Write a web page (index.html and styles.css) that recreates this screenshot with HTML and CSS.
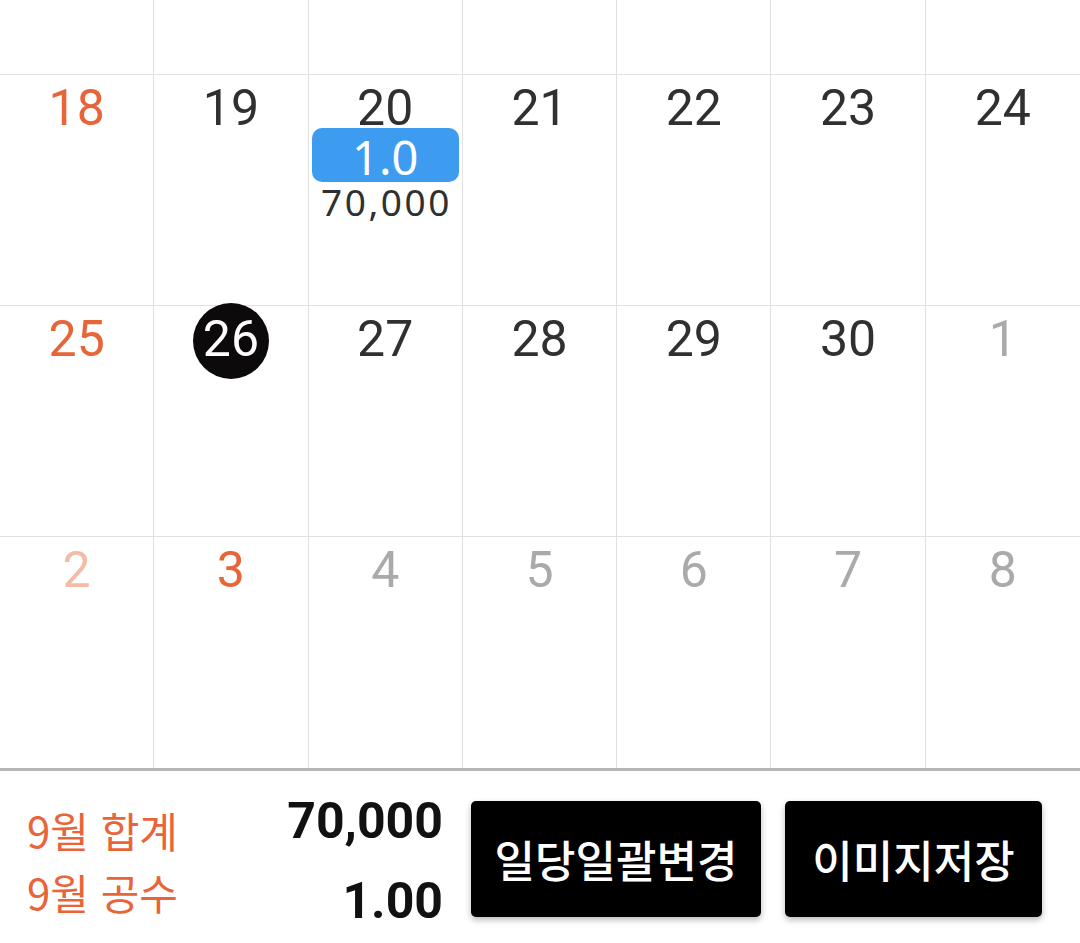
FILE: index.html
```html
<!DOCTYPE html>
<html lang="ko">
<head>
<meta charset="utf-8">
<title>달력</title>
<link rel="stylesheet" href="styles.css">
</head>
<body>
<div class="cal">
  <div class="row top">
    <div class="cell"></div><div class="cell"></div><div class="cell"></div><div class="cell"></div><div class="cell"></div><div class="cell"></div><div class="cell"></div>
  </div>
  <div class="row week">
    <div class="cell"><span class="num sun">18</span></div>
    <div class="cell"><span class="num">19</span></div>
    <div class="cell"><span class="num">20</span><div class="badge">1.0</div><div class="amount">70,000</div></div>
    <div class="cell"><span class="num">21</span></div>
    <div class="cell"><span class="num">22</span></div>
    <div class="cell"><span class="num">23</span></div>
    <div class="cell"><span class="num">24</span></div>
  </div>
  <div class="row week">
    <div class="cell"><span class="num sun">25</span></div>
    <div class="cell"><span class="num today">26</span></div>
    <div class="cell"><span class="num">27</span></div>
    <div class="cell"><span class="num">28</span></div>
    <div class="cell"><span class="num">29</span></div>
    <div class="cell"><span class="num">30</span></div>
    <div class="cell"><span class="num other">1</span></div>
  </div>
  <div class="row week last">
    <div class="cell"><span class="num sun-other">2</span></div>
    <div class="cell"><span class="num sun">3</span></div>
    <div class="cell"><span class="num other">4</span></div>
    <div class="cell"><span class="num other">5</span></div>
    <div class="cell"><span class="num other">6</span></div>
    <div class="cell"><span class="num other">7</span></div>
    <div class="cell"><span class="num other">8</span></div>
  </div>
</div>
<div class="footer">
  <div class="summary">
    <div class="labels">
      <div>9월 합계</div>
      <div>9월 공수</div>
    </div>
    <div class="values">
      <div>70,000</div>
      <div>1.00</div>
    </div>
  </div>
  <button class="btn btn-wide">일당일괄변경</button>
  <button class="btn btn-save">이미지저장</button>
</div>
</body>
</html>
```
FILE: styles.css
```css
html, body {
  margin: 0;
  padding: 0;
  background: #ffffff;
}
body {
  width: 1080px;
  height: 943px;
  overflow: hidden;
  font-family: Roboto, "Noto Sans", "Noto Sans CJK KR", sans-serif;
}
.row {
  display: grid;
  grid-template-columns: repeat(7, 1fr);
  border-bottom: 1px solid #e1e1e3;
}
.row.top { height: 74px; }
.row.week { height: 230px; }
.row.week.last {
  height: 231px;
  border-bottom: 3px solid #b6b6b6;
}
.cell {
  border-right: 1px solid #e1e1e3;
  display: flex;
  flex-direction: column;
  align-items: center;
  padding-top: 13px;
  min-width: 0;
}
.cell:last-child { border-right: none; }
.row.top .cell { padding-top: 0; }
.num {
  font-family: Roboto, sans-serif;
  font-size: 50px;
  line-height: 40px;
  color: #303030;
}
.num.sun { color: #e8653a; }
.num.sun-other { color: #f4bca6; }
.num.other { color: #aaaaaa; }
.num.today {
  position: relative;
  z-index: 0;
  color: #ffffff;
}
.num.today::before {
  content: "";
  position: absolute;
  left: 50%;
  top: 50%;
  width: 76px;
  height: 76px;
  margin-left: -38px;
  margin-top: -36px;
  border-radius: 50%;
  background: #0c0a0a;
  z-index: -1;
}
.badge {
  align-self: stretch;
  box-sizing: border-box;
  margin: 0 3px;
  height: 54px;
  padding-top: 5px;
  border-radius: 10px;
  background: #3d9cf0;
  color: #ffffff;
  font-family: "Noto Sans", sans-serif;
  font-size: 47px;
  line-height: 49px;
  text-align: center;
}
.amount {
  font-family: "Noto Sans", sans-serif;
  font-size: 37px;
  line-height: 40px;
  color: #303030;
  letter-spacing: 2.5px;
  margin-right: -2.5px;
}
.footer {
  display: flex;
  align-items: center;
  height: 164px;
  padding: 8px 0 0 27px;
}
.summary {
  width: 416px;
  display: flex;
  justify-content: space-between;
  align-items: center;
}
.labels {
  font-family: "Noto Sans CJK KR", sans-serif;
  font-size: 42px;
  line-height: 62px;
  color: #e8653a;
}
.values {
  font-family: Roboto, sans-serif;
  font-weight: 700;
  font-size: 50px;
  line-height: 80px;
  color: #111111;
  text-align: right;
}
.btn {
  height: 116px;
  margin-bottom: 4px;
  border: none;
  border-radius: 5px;
  background: #000000;
  color: #ffffff;
  font-family: "Noto Sans CJK KR", sans-serif;
  font-weight: 500;
  font-size: 44px;
  padding: 0;
  box-shadow: 0 3px 6px rgba(0, 0, 0, 0.28);
}
.btn-wide {
  width: 290px;
  margin-left: 28px;
}
.btn-save {
  width: 257px;
  margin-left: 24px;
}
```
